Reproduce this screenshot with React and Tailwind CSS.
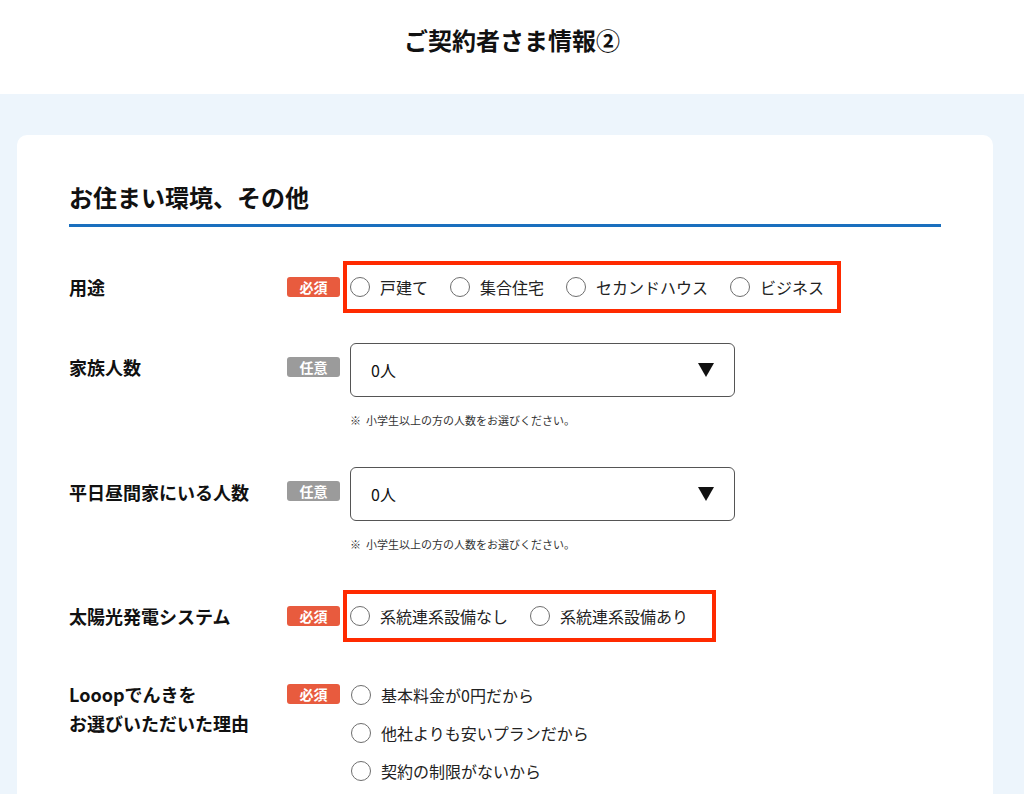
import React from "react";

const font = { fontFamily: '"Noto Sans CJK JP", "Noto Sans", sans-serif' };

const Badge = ({ required }) =>
  required ? (
    <span className="flex h-[20px] w-[53px] min-w-[53px] shrink-0 items-center justify-center rounded-[3px] bg-[#e85b3e] text-[14px] font-bold leading-none text-white">
      必須
    </span>
  ) : (
    <span className="flex h-[20px] w-[53px] min-w-[53px] shrink-0 items-center justify-center rounded-[3px] bg-[#9b9b9b] text-[14px] font-bold leading-none text-white">
      任意
    </span>
  );

const Radio = ({ label }) => (
  <label className="flex h-[24px] items-center gap-[10px] whitespace-nowrap text-[16px] text-[#222]">
    <span className="h-[20px] w-[20px] shrink-0 rounded-full border-[1.5px] border-[#6e6e6e] bg-white" />
    {label}
  </label>
);

const Select = ({ value }) => (
  <div className="flex h-[54px] w-[385px] items-center justify-between rounded-[6px] border border-[#555] pl-[20px] pr-[20px] text-[16px] text-[#111]">
    <span>{value}</span>
    <svg width="16" height="14" viewBox="0 0 16 14">
      <polygon points="0,0 16,0 8,14" fill="#111" />
    </svg>
  </div>
);

const Note = () => (
  <p className="mt-[15px] text-[11px] leading-[16px] text-[#333]">※&nbsp; 小学生以上の方の人数をお選びください。</p>
);

const Label = ({ children, className = "" }) => (
  <div className={`w-[218px] shrink-0 text-[18px] font-bold text-[#111] ${className}`}>{children}</div>
);

export default function App() {
  return (
    <div className="min-h-screen bg-[#edf5fc]" style={font}>
      <header className="h-[94px] bg-white pt-[24px] text-center">
        <h1 className="text-[24px] font-bold leading-[32px] text-[#111]">ご契約者さま情報②</h1>
      </header>

      <div className="ml-[17px] mr-[31px] mt-[41px] rounded-[10px] bg-white px-[52px] pb-[60px] pt-[46px]">
        <h2 className="border-b-[3px] border-[#1a6fbe] pb-[11px] text-[24px] font-bold leading-[32px] text-[#111]">
          お住まい環境、その他
        </h2>

        {/* 用途 */}
        <div className="mt-[34px] flex items-center">
          <Label>用途</Label>
          <Badge required />
          <div className="ml-[3px] flex h-[52px] shrink-0 items-center gap-[22px] border-4 border-[#ff2a00] pl-[3px] pr-[13px]">
            <Radio label="戸建て" />
            <Radio label="集合住宅" />
            <Radio label="セカンドハウス" />
            <Radio label="ビジネス" />
          </div>
        </div>

        {/* 家族人数 */}
        <div className="mt-[30px] flex items-start">
          <Label className="pt-[12px] leading-[24px]">家族人数</Label>
          <div className="mt-[14px] shrink-0">
            <Badge />
          </div>
          <div className="ml-[10px]">
            <Select value="0人" />
            <Note />
          </div>
        </div>

        {/* 平日昼間家にいる人数 */}
        <div className="mt-[39px] flex items-start">
          <Label className="pt-[13px] leading-[24px]">平日昼間家にいる人数</Label>
          <div className="mt-[14px] shrink-0">
            <Badge />
          </div>
          <div className="ml-[10px]">
            <Select value="0人" />
            <Note />
          </div>
        </div>

        {/* 太陽光発電システム */}
        <div className="mt-[38px] flex items-center">
          <Label>太陽光発電システム</Label>
          <Badge required />
          <div className="ml-[3px] flex h-[52px] shrink-0 items-center gap-[22px] border-4 border-[#ff2a00] pl-[3px] pr-[24px]">
            <Radio label="系統連系設備なし" />
            <Radio label="系統連系設備あり" />
          </div>
        </div>

        {/* 理由 */}
        <div className="mt-[38px] flex items-start">
          <Label className="leading-[29px]">
            Looopでんきを
            <br />
            お選びいただいた理由
          </Label>
          <div className="mt-[4px] shrink-0">
            <Badge required />
          </div>
          <div className="ml-[11px] mt-[3px] flex flex-col gap-[14px]">
            <Radio label="基本料金が0円だから" />
            <Radio label="他社よりも安いプランだから" />
            <Radio label="契約の制限がないから" />
          </div>
        </div>
      </div>
    </div>
  );
}
